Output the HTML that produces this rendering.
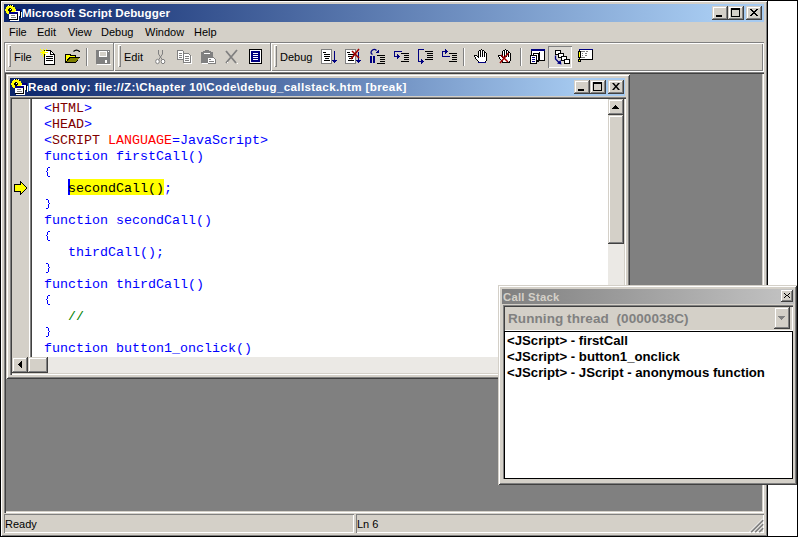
<!DOCTYPE html>
<html><head><meta charset="utf-8">
<style>
*{margin:0;padding:0;box-sizing:border-box}
html,body{width:798px;height:537px;overflow:hidden;background:#fff;position:relative;font-family:"Liberation Sans",sans-serif;font-size:11px;line-height:13px;color:#000}
.a{position:absolute}
.face{background:#d4d0c8}
.cbtn{position:absolute;width:16px;height:14px;background:#d4d0c8;box-shadow:inset -1px -1px #404040,inset 1px 1px #d4d0c8,inset -2px -2px #808080,inset 2px 2px #fff}
.sunk{position:absolute;box-shadow:inset 1px 1px #808080,inset -1px -1px #fff}
.mono{position:absolute;font-family:"Liberation Mono",monospace;font-size:13.33px;white-space:pre;line-height:16px;}
.cap{position:absolute;color:#fff;font-weight:bold;white-space:pre;line-height:14px}
.t{position:absolute;white-space:pre}
.grip{position:absolute;width:3px;height:22px;top:45px;box-shadow:inset 1px 1px #fff,inset -1px -1px #808080;background:#d4d0c8}
.vsep{position:absolute;width:2px;height:18px;top:48px;box-shadow:inset 1px 0 #808080,inset -1px 0 #fff}
.bdiv{position:absolute;width:2px;height:28px;top:43px;box-shadow:inset 1px 0 #808080,inset -1px 0 #fff}
svg{position:absolute;overflow:visible}
.b{color:#0000ff}.m{color:#800000;-webkit-text-stroke:0}.r{color:#ff0000}.n{color:#000080}.g{color:#008000}
</style></head><body>
<!-- outer black border -->
<div class="a" style="left:0;top:0;width:798px;height:1px;background:#000"></div>
<div class="a" style="left:797px;top:0;width:1px;height:537px;background:#000"></div>

<!-- main window -->
<div class="a face" style="left:0;top:0;width:768px;height:537px;box-shadow:inset 1px 1px #000,inset -1px -1px #000,inset 2px 2px #fff,inset -2px -2px #808080"></div>
<!-- title -->
<div class="a" style="left:4px;top:4px;width:760px;height:18px;background:linear-gradient(to right,#0a246a,#a6caf0 93%)"></div>
<svg style="left:4px;top:3px" width="20" height="20" shape-rendering="crispEdges"><rect x="9" y="6" width="8" height="2" fill="#000080"/><rect x="9" y="8" width="7" height="5" fill="#fff"/><rect x="16" y="8" width="1" height="6" fill="#000"/><rect x="17" y="9" width="1" height="6" fill="#fff"/>
<path d="M5 2h3v1h2v1h1v2h1v2h-1v2h-1v1h-2v1h-3v-1h-2v-1h-1v-2h-1v-2h1v-2h1v-1h2z" fill="#ffff00"/>
<rect x="5" y="5" width="2" height="1" fill="#000"/><rect x="5" y="8" width="2" height="1" fill="#000"/><rect x="4" y="6" width="1" height="2" fill="#000"/><rect x="7" y="6" width="1" height="2" fill="#000"/><rect x="5" y="6" width="2" height="2" fill="#000"/><rect x="6" y="6" width="1" height="1" fill="#fff"/>
<rect x="5" y="2" width="1" height="1" fill="#000"/><rect x="7" y="2" width="1" height="1" fill="#000"/><rect x="9" y="3" width="1" height="1" fill="#000"/><rect x="4" y="2" width="1" height="1" fill="#fff"/><rect x="8" y="2" width="1" height="1" fill="#fff"/>
<rect x="5" y="9" width="9" height="2" fill="#000080"/><rect x="5" y="11" width="8" height="5" fill="#fff"/><rect x="13" y="11" width="1" height="6" fill="#000"/><rect x="5" y="16" width="9" height="1" fill="#000"/><rect x="6" y="17" width="9" height="1" fill="#fff"/><rect x="14" y="11" width="1" height="7" fill="#fff"/>
<rect x="7" y="12" width="4" height="1" fill="#808080"/><rect x="7" y="14" width="4" height="1" fill="#808080"/><rect x="11" y="14" width="1" height="1" fill="#808080"/></svg>
<div class="cap" style="left:22px;top:6px;font-size:11.6px;letter-spacing:0.1px">Microsoft Script Debugger</div>
<div class="cbtn" style="left:712px;top:6px"><svg style="left:4px;top:9px" width="6" height="2"><rect width="6" height="2" fill="#000"/></svg></div>
<div class="cbtn" style="left:728px;top:6px"><svg style="left:3px;top:2px" width="9" height="9"><path d="M0 0h9v9h-9zM1 2v6h7v-6z" fill="#000" fill-rule="evenodd"/></svg></div>
<div class="cbtn" style="left:746px;top:6px"><svg style="left:4px;top:3px" width="8" height="7" shape-rendering="crispEdges"><path d="M0 0h2l2 2.5l2-2.5h2l-3 3.5l3 3.5h-2l-2-2.5l-2 2.5h-2l3-3.5z" fill="#000"/></svg></div>

<!-- menu -->
<div class="t" style="left:9px;top:26px">File</div>
<div class="t" style="left:37px;top:26px">Edit</div>
<div class="t" style="left:68px;top:26px">View</div>
<div class="t" style="left:101px;top:26px">Debug</div>
<div class="t" style="left:145px;top:26px">Window</div>
<div class="t" style="left:194px;top:26px">Help</div>

<!-- toolbar band -->
<div class="a" style="left:4px;top:42px;width:760px;height:30px;box-shadow:inset 1px 1px #808080,inset -1px -1px #fff,inset 2px 2px #fff,inset -2px -2px #808080"></div>
<div class="grip" style="left:8px"></div>
<div class="t" style="left:14px;top:51px">File</div>
<div class="vsep" style="left:86px"></div>
<div class="bdiv" style="left:113px"></div>
<div class="grip" style="left:118px"></div>
<div class="t" style="left:124px;top:51px">Edit</div>
<div class="bdiv" style="left:270px"></div>
<div class="grip" style="left:274px"></div>
<div class="t" style="left:280px;top:51px">Debug</div>
<div class="vsep" style="left:463px"></div>
<div class="vsep" style="left:520px"></div>
<!-- call stack pressed button -->
<div class="a" style="left:548px;top:46px;width:24px;height:22px;background:#dbd8d2;box-shadow:inset 1px 1px #808080,inset -1px -1px #fff"></div>

<!--ICONS-->
<svg style="left:38px;top:46px" width="20" height="20" shape-rendering="crispEdges">
<path d="M6 4h6l4 4v10h-10z" fill="#fff" stroke="#000" stroke-width="1" transform="translate(0.5,0.5)"/>
<path d="M12 4v4h4" fill="none" stroke="#000" transform="translate(0.5,0.5)"/>
<rect x="8" y="10" width="7" height="1" fill="#000"/><rect x="8" y="12" width="7" height="1" fill="#000"/><rect x="8" y="14" width="7" height="1" fill="#000"/>
<path d="M2 3l6 6M8 3l-6 6M5 2v8M1 6h8" stroke="#ffff00" stroke-width="1.2" transform="translate(0.5,0.5)"/>
</svg>
<svg style="left:62px;top:46px" width="20" height="20" shape-rendering="crispEdges">
<path d="M3 8h5l1 1h5v2h4l-4 6h-11z" fill="#000"/>
<path d="M4 9h3l1 1h5v1h-6l-3 5z" fill="#ffff00"/>
<path d="M5 16l3-4h9l-3 4z" fill="#808000"/>
<path d="M11.5 5.5q3-3 6 0" fill="none" stroke="#000" stroke-width="1.2" shape-rendering="auto"/>
<path d="M16 6h2v-2z" fill="#000"/>
</svg>
<svg style="left:93px;top:46px" width="20" height="20" shape-rendering="crispEdges">
<rect x="3" y="4" width="14" height="14" fill="#808080"/>
<rect x="6" y="5" width="8" height="6" fill="#fff"/><rect x="7" y="6" width="6" height="4" fill="#d4d0c8"/>
<rect x="12" y="14" width="2" height="3" fill="#fff"/><rect x="15" y="5" width="1" height="1" fill="#fff"/>
<rect x="4" y="18" width="14" height="1" fill="#fff"/>
</svg>
<svg style="left:152px;top:46px" width="20" height="20" shape-rendering="crispEdges">
<path d="M6.5 4v4l2 3M10.5 4v4l-2 3M8.5 11l-2 3M8.5 11l2 3" fill="none" stroke="#808080" stroke-width="1" shape-rendering="auto"/>
<ellipse cx="5.5" cy="15.5" rx="1.8" ry="2.2" fill="#fff" stroke="#808080" shape-rendering="auto"/>
<ellipse cx="11" cy="15.5" rx="1.8" ry="2.2" fill="#fff" stroke="#808080" shape-rendering="auto"/>
</svg>
<svg style="left:175px;top:46px" width="20" height="20" shape-rendering="crispEdges">
<path d="M2.5 4.5h5l1 1v8h-6z" fill="#fff" stroke="#808080"/>
<path d="M8.5 7.5h5l2 2v7h-7z" fill="#fff" stroke="#808080"/>
<rect x="4" y="7" width="3" height="1" fill="#808080"/><rect x="4" y="9" width="3" height="1" fill="#808080"/><rect x="4" y="11" width="3" height="1" fill="#808080"/>
<rect x="10" y="10" width="4" height="1" fill="#808080"/><rect x="10" y="12" width="4" height="1" fill="#808080"/><rect x="10" y="14" width="4" height="1" fill="#808080"/>
<rect x="9" y="17" width="8" height="1" fill="#fff"/><rect x="16" y="10" width="1" height="8" fill="#fff"/>
</svg>
<svg style="left:199px;top:46px" width="20" height="20" shape-rendering="crispEdges">
<path d="M2 6h2v-1h2v-1h4v1h2v1h2v11h-12z" fill="#808080"/>
<rect x="5" y="7" width="6" height="1" fill="#fff"/>
<path d="M8.5 11.5h6l2 2v4h-8z" fill="#fff" stroke="#808080"/>
<rect x="10" y="13" width="2" height="1" fill="#808080"/><rect x="10" y="15" width="5" height="1" fill="#808080"/>
<rect x="3" y="17" width="6" height="1" fill="#fff"/>
</svg>
<svg style="left:222px;top:46px" width="20" height="20" shape-rendering="crispEdges">
<path d="M4 5l10 12M15 4l-11 13" stroke="#808080" stroke-width="1.8" shape-rendering="auto"/>
<path d="M5 17l1-1M15 17l1 1" stroke="#fff" stroke-width="1" shape-rendering="auto"/>
</svg>
<svg style="left:246px;top:46px" width="20" height="20" shape-rendering="crispEdges">
<rect x="3" y="3" width="13" height="15" fill="#000"/>
<rect x="4" y="4" width="11" height="13" fill="#fff"/>
<rect x="5" y="5" width="9" height="11" fill="#000080"/>
<rect x="7" y="7" width="5" height="1" fill="#fff"/><rect x="7" y="9" width="5" height="1" fill="#fff"/><rect x="7" y="11" width="5" height="1" fill="#fff"/><rect x="7" y="13" width="5" height="1" fill="#fff"/>
</svg>
<svg style="left:318px;top:46px" width="20" height="20" shape-rendering="crispEdges">
<rect x="3" y="3" width="11" height="15" fill="#808080"/><rect x="4" y="4" width="9" height="13" fill="#fff"/>
<rect x="5" y="6" width="3" height="1" fill="#000"/><rect x="6" y="8" width="6" height="1" fill="#000"/><rect x="6" y="10" width="6" height="1" fill="#000"/><rect x="7" y="12" width="4" height="1" fill="#000"/><rect x="6" y="14" width="6" height="1" fill="#000"/>
<rect x="16" y="5" width="1" height="10" fill="#000080"/><path d="M14 14h5l-2.5 3z" fill="#000080"/>
</svg>
<svg style="left:343px;top:46px" width="20" height="20" shape-rendering="crispEdges">
<rect x="2" y="3" width="11" height="15" fill="#808080"/><rect x="3" y="4" width="9" height="13" fill="#fff"/>
<rect x="4" y="6" width="3" height="1" fill="#000"/><rect x="5" y="8" width="6" height="1" fill="#000"/><rect x="5" y="10" width="6" height="1" fill="#000"/><rect x="6" y="12" width="4" height="1" fill="#000"/><rect x="5" y="14" width="6" height="1" fill="#000"/>
<rect x="15" y="6" width="1" height="9" fill="#000080"/><path d="M13 14h5l-2.5 3z" fill="#000080"/>
<path d="M8 13l8-10M9 5l7 7" stroke="#a00000" stroke-width="1.6" shape-rendering="auto"/>
</svg>
<svg style="left:367px;top:46px" width="20" height="20" shape-rendering="crispEdges">
<rect x="3" y="10" width="2" height="7" fill="#000080"/><rect x="6" y="10" width="2" height="7" fill="#000080"/>
<path d="M5.5 8.5q-3-2 0-4.5q2-1.5 4 0.5" fill="none" stroke="#000080" stroke-width="1.3" shape-rendering="auto"/>
<path d="M8 7h4v-3z" fill="#000080"/>
<rect x="10" y="9" width="8" height="1" fill="#000"/><rect x="13" y="11" width="5" height="1" fill="#000"/><rect x="13" y="13" width="5" height="1" fill="#000"/><rect x="13" y="15" width="5" height="1" fill="#000"/><rect x="10" y="17" width="8" height="1" fill="#000"/>
</svg>
<svg style="left:391px;top:46px" width="20" height="20" shape-rendering="crispEdges">
<rect x="3" y="5" width="8" height="1" fill="#000080"/><rect x="3" y="5" width="1" height="6" fill="#000080"/><rect x="3" y="10" width="4" height="1" fill="#000080"/>
<path d="M6 8h1v1h1v1h1v1h-1v1h-1v1h-1z" fill="#000080"/>
<rect x="10" y="7" width="8" height="1" fill="#000"/><rect x="13" y="9" width="5" height="1" fill="#000"/><rect x="13" y="11" width="5" height="1" fill="#000"/><rect x="13" y="13" width="5" height="1" fill="#000"/><rect x="10" y="15" width="8" height="1" fill="#000"/>
</svg>
<svg style="left:415px;top:46px" width="20" height="20" shape-rendering="crispEdges">
<rect x="3" y="3" width="6" height="1" fill="#000080"/><rect x="3" y="3" width="1" height="13" fill="#000080"/><rect x="3" y="15" width="4" height="1" fill="#000080"/>
<path d="M6 13h1v1h1v1h1v1h-1v1h-1v1h-1z" fill="#000080"/>
<rect x="10" y="5" width="8" height="1" fill="#000"/><rect x="12" y="7" width="6" height="1" fill="#000"/><rect x="12" y="9" width="6" height="1" fill="#000"/><rect x="12" y="11" width="6" height="1" fill="#000"/><rect x="10" y="13" width="8" height="1" fill="#000"/>
</svg>
<svg style="left:439px;top:46px" width="20" height="20" shape-rendering="crispEdges">
<rect x="3" y="5" width="1" height="6" fill="#000080"/><rect x="3" y="10" width="8" height="1" fill="#000080"/><rect x="3" y="5" width="4" height="1" fill="#000080"/>
<path d="M6 3h1v1h1v1h1v1h-1v1h-1v1h-1z" fill="#000080"/>
<rect x="10" y="7" width="8" height="1" fill="#000"/><rect x="13" y="9" width="5" height="1" fill="#000"/><rect x="13" y="11" width="5" height="1" fill="#000"/><rect x="13" y="13" width="5" height="1" fill="#000"/><rect x="10" y="15" width="8" height="1" fill="#000"/>
</svg>
<svg style="left:471px;top:46px" width="20" height="20" shape-rendering="crispEdges"><rect x="10" y="3" width="1" height="1" fill="#000"/><rect x="8" y="4" width="2" height="1" fill="#000"/><rect x="10" y="4" width="1" height="1" fill="#fff"/><rect x="11" y="4" width="2" height="1" fill="#000"/><rect x="7" y="5" width="1" height="1" fill="#000"/><rect x="8" y="5" width="1" height="1" fill="#fff"/><rect x="9" y="5" width="1" height="1" fill="#000"/><rect x="10" y="5" width="1" height="1" fill="#fff"/><rect x="11" y="5" width="1" height="1" fill="#000"/><rect x="12" y="5" width="1" height="1" fill="#fff"/><rect x="13" y="5" width="1" height="1" fill="#000"/><rect x="7" y="6" width="1" height="1" fill="#000"/><rect x="8" y="6" width="1" height="1" fill="#fff"/><rect x="9" y="6" width="1" height="1" fill="#000"/><rect x="10" y="6" width="1" height="1" fill="#fff"/><rect x="11" y="6" width="1" height="1" fill="#000"/><rect x="12" y="6" width="1" height="1" fill="#fff"/><rect x="13" y="6" width="2" height="1" fill="#000"/><rect x="7" y="7" width="1" height="1" fill="#000"/><rect x="8" y="7" width="1" height="1" fill="#fff"/><rect x="9" y="7" width="1" height="1" fill="#000"/><rect x="10" y="7" width="1" height="1" fill="#fff"/><rect x="11" y="7" width="1" height="1" fill="#000"/><rect x="12" y="7" width="1" height="1" fill="#fff"/><rect x="13" y="7" width="1" height="1" fill="#000"/><rect x="14" y="7" width="1" height="1" fill="#fff"/><rect x="15" y="7" width="1" height="1" fill="#000"/><rect x="7" y="8" width="1" height="1" fill="#000"/><rect x="8" y="8" width="1" height="1" fill="#fff"/><rect x="9" y="8" width="1" height="1" fill="#000"/><rect x="10" y="8" width="1" height="1" fill="#fff"/><rect x="11" y="8" width="1" height="1" fill="#000"/><rect x="12" y="8" width="1" height="1" fill="#fff"/><rect x="13" y="8" width="1" height="1" fill="#000"/><rect x="14" y="8" width="1" height="1" fill="#fff"/><rect x="15" y="8" width="1" height="1" fill="#000"/><rect x="3" y="9" width="3" height="1" fill="#000"/><rect x="7" y="9" width="1" height="1" fill="#000"/><rect x="8" y="9" width="1" height="1" fill="#fff"/><rect x="9" y="9" width="1" height="1" fill="#000"/><rect x="10" y="9" width="1" height="1" fill="#fff"/><rect x="11" y="9" width="1" height="1" fill="#000"/><rect x="12" y="9" width="1" height="1" fill="#fff"/><rect x="13" y="9" width="1" height="1" fill="#000"/><rect x="14" y="9" width="1" height="1" fill="#fff"/><rect x="15" y="9" width="1" height="1" fill="#000"/><rect x="3" y="10" width="1" height="1" fill="#000"/><rect x="4" y="10" width="2" height="1" fill="#fff"/><rect x="6" y="10" width="2" height="1" fill="#000"/><rect x="8" y="10" width="1" height="1" fill="#fff"/><rect x="9" y="10" width="1" height="1" fill="#000"/><rect x="10" y="10" width="1" height="1" fill="#fff"/><rect x="11" y="10" width="1" height="1" fill="#000"/><rect x="12" y="10" width="1" height="1" fill="#fff"/><rect x="13" y="10" width="1" height="1" fill="#000"/><rect x="14" y="10" width="1" height="1" fill="#fff"/><rect x="15" y="10" width="1" height="1" fill="#000"/><rect x="4" y="11" width="1" height="1" fill="#000"/><rect x="5" y="11" width="2" height="1" fill="#fff"/><rect x="7" y="11" width="1" height="1" fill="#000"/><rect x="8" y="11" width="7" height="1" fill="#fff"/><rect x="15" y="11" width="1" height="1" fill="#000"/><rect x="4" y="12" width="1" height="1" fill="#000"/><rect x="5" y="12" width="10" height="1" fill="#fff"/><rect x="15" y="12" width="1" height="1" fill="#000"/><rect x="5" y="13" width="1" height="1" fill="#000"/><rect x="6" y="13" width="9" height="1" fill="#fff"/><rect x="15" y="13" width="1" height="1" fill="#000"/><rect x="6" y="14" width="1" height="1" fill="#000"/><rect x="7" y="14" width="8" height="1" fill="#fff"/><rect x="15" y="14" width="1" height="1" fill="#000"/><rect x="7" y="15" width="1" height="1" fill="#000"/><rect x="8" y="15" width="6" height="1" fill="#fff"/><rect x="14" y="15" width="1" height="1" fill="#000"/><rect x="7" y="16" width="8" height="1" fill="#000080"/></svg>
<svg style="left:495px;top:46px" width="20" height="20" shape-rendering="crispEdges"><rect x="10" y="3" width="1" height="1" fill="#000"/><rect x="8" y="4" width="2" height="1" fill="#000"/><rect x="10" y="4" width="1" height="1" fill="#fff"/><rect x="11" y="4" width="2" height="1" fill="#000"/><rect x="7" y="5" width="1" height="1" fill="#000"/><rect x="8" y="5" width="1" height="1" fill="#fff"/><rect x="9" y="5" width="1" height="1" fill="#000"/><rect x="10" y="5" width="1" height="1" fill="#fff"/><rect x="11" y="5" width="1" height="1" fill="#000"/><rect x="12" y="5" width="1" height="1" fill="#fff"/><rect x="13" y="5" width="1" height="1" fill="#000"/><rect x="7" y="6" width="1" height="1" fill="#000"/><rect x="8" y="6" width="1" height="1" fill="#fff"/><rect x="9" y="6" width="1" height="1" fill="#000"/><rect x="10" y="6" width="1" height="1" fill="#fff"/><rect x="11" y="6" width="1" height="1" fill="#000"/><rect x="12" y="6" width="1" height="1" fill="#fff"/><rect x="13" y="6" width="2" height="1" fill="#000"/><rect x="7" y="7" width="1" height="1" fill="#000"/><rect x="8" y="7" width="1" height="1" fill="#fff"/><rect x="9" y="7" width="1" height="1" fill="#000"/><rect x="10" y="7" width="1" height="1" fill="#fff"/><rect x="11" y="7" width="1" height="1" fill="#000"/><rect x="12" y="7" width="1" height="1" fill="#fff"/><rect x="13" y="7" width="1" height="1" fill="#000"/><rect x="14" y="7" width="1" height="1" fill="#fff"/><rect x="15" y="7" width="1" height="1" fill="#000"/><rect x="7" y="8" width="1" height="1" fill="#000"/><rect x="8" y="8" width="1" height="1" fill="#fff"/><rect x="9" y="8" width="1" height="1" fill="#000"/><rect x="10" y="8" width="1" height="1" fill="#fff"/><rect x="11" y="8" width="1" height="1" fill="#000"/><rect x="12" y="8" width="1" height="1" fill="#fff"/><rect x="13" y="8" width="1" height="1" fill="#000"/><rect x="14" y="8" width="1" height="1" fill="#fff"/><rect x="15" y="8" width="1" height="1" fill="#000"/><rect x="3" y="9" width="3" height="1" fill="#000"/><rect x="7" y="9" width="1" height="1" fill="#000"/><rect x="8" y="9" width="1" height="1" fill="#fff"/><rect x="9" y="9" width="1" height="1" fill="#000"/><rect x="10" y="9" width="1" height="1" fill="#fff"/><rect x="11" y="9" width="1" height="1" fill="#000"/><rect x="12" y="9" width="1" height="1" fill="#fff"/><rect x="13" y="9" width="1" height="1" fill="#000"/><rect x="14" y="9" width="1" height="1" fill="#fff"/><rect x="15" y="9" width="1" height="1" fill="#000"/><rect x="3" y="10" width="1" height="1" fill="#000"/><rect x="4" y="10" width="2" height="1" fill="#fff"/><rect x="6" y="10" width="2" height="1" fill="#000"/><rect x="8" y="10" width="1" height="1" fill="#fff"/><rect x="9" y="10" width="1" height="1" fill="#000"/><rect x="10" y="10" width="1" height="1" fill="#fff"/><rect x="11" y="10" width="1" height="1" fill="#000"/><rect x="12" y="10" width="1" height="1" fill="#fff"/><rect x="13" y="10" width="1" height="1" fill="#000"/><rect x="14" y="10" width="1" height="1" fill="#fff"/><rect x="15" y="10" width="1" height="1" fill="#000"/><rect x="4" y="11" width="1" height="1" fill="#000"/><rect x="5" y="11" width="2" height="1" fill="#fff"/><rect x="7" y="11" width="1" height="1" fill="#000"/><rect x="8" y="11" width="7" height="1" fill="#fff"/><rect x="15" y="11" width="1" height="1" fill="#000"/><rect x="4" y="12" width="1" height="1" fill="#000"/><rect x="5" y="12" width="10" height="1" fill="#fff"/><rect x="15" y="12" width="1" height="1" fill="#000"/><rect x="5" y="13" width="1" height="1" fill="#000"/><rect x="6" y="13" width="9" height="1" fill="#fff"/><rect x="15" y="13" width="1" height="1" fill="#000"/><rect x="6" y="14" width="1" height="1" fill="#000"/><rect x="7" y="14" width="8" height="1" fill="#fff"/><rect x="15" y="14" width="1" height="1" fill="#000"/><rect x="7" y="15" width="1" height="1" fill="#000"/><rect x="8" y="15" width="6" height="1" fill="#fff"/><rect x="14" y="15" width="1" height="1" fill="#000"/><rect x="7" y="16" width="8" height="1" fill="#000"/><path d="M5 17L13.5 7M6 9L13 16" stroke="#a00000" stroke-width="1.5" shape-rendering="auto"/></svg>
<svg style="left:528px;top:46px" width="20" height="20" shape-rendering="crispEdges">
<rect x="3" y="3" width="14" height="12" fill="#000"/><rect x="3" y="3" width="14" height="2" fill="#000080"/>
<rect x="4" y="5" width="12" height="9" fill="#fff"/><rect x="11" y="6" width="1" height="8" fill="#000"/>
<rect x="5" y="7" width="6" height="9" fill="#000"/><rect x="6" y="8" width="4" height="6" fill="#fff"/>
<rect x="2" y="9" width="7" height="9" fill="#000"/><rect x="3" y="10" width="5" height="7" fill="#fff"/>
<rect x="4" y="11" width="3" height="1" fill="#000080"/><rect x="4" y="13" width="3" height="1" fill="#000080"/><rect x="4" y="15" width="3" height="1" fill="#000080"/>
</svg>
<svg style="left:552px;top:46px" width="20" height="20" shape-rendering="crispEdges">
<rect x="3" y="4" width="6" height="5" fill="#000"/><rect x="4" y="5" width="4" height="3" fill="#fff"/>
<rect x="6" y="7" width="6" height="5" fill="#000"/><rect x="7" y="8" width="4" height="3" fill="#fff"/>
<rect x="9" y="10" width="6" height="5" fill="#000"/><rect x="10" y="11" width="4" height="3" fill="#fff"/>
<rect x="12" y="13" width="6" height="5" fill="#000"/><rect x="13" y="14" width="4" height="3" fill="#fff"/>
<path d="M3.5 9.5v3.5l3.5 3.5" fill="none" stroke="#000080" stroke-width="1.3" shape-rendering="auto"/>
<polygon points="9.5,18.5 5,17.5 8.5,14" fill="#000080" shape-rendering="auto"/>
</svg>
<svg style="left:576px;top:46px" width="20" height="20" shape-rendering="crispEdges">
<rect x="3" y="3" width="14" height="11" fill="#000"/><rect x="3" y="3" width="14" height="1" fill="#000080"/>
<rect x="4" y="4" width="12" height="9" fill="#fff"/>
<rect x="5" y="5" width="4" height="1" fill="#808080"/><rect x="10" y="5" width="2" height="1" fill="#808080"/><rect x="6" y="7" width="1" height="1" fill="#808080"/><rect x="9" y="7" width="2" height="1" fill="#808080"/><rect x="6" y="9" width="1" height="1" fill="#808080"/><rect x="9" y="9" width="2" height="1" fill="#808080"/><rect x="5" y="11" width="4" height="1" fill="#808080"/>
<rect x="2" y="5" width="3" height="7" fill="#000"/><rect x="3" y="6" width="1" height="5" fill="#ffff00"/>
<rect x="2" y="13" width="3" height="3" fill="#000"/><rect x="3" y="14" width="1" height="1" fill="#ffff00"/>
</svg>


<!-- MDI client -->
<div class="a" style="left:4px;top:72px;width:760px;height:441px;background:#808080;box-shadow:inset 1px 1px #808080,inset 2px 2px #404040,inset -1px -1px #fff,inset -2px -2px #d4d0c8"></div>

<!-- child window -->
<div class="a face" style="left:6px;top:74px;width:624px;height:305px;box-shadow:inset 1px 1px #d4d0c8,inset -1px -1px #404040,inset 2px 2px #fff,inset -2px -2px #808080"></div>
<div class="a" style="left:10px;top:78px;width:615px;height:18px;background:linear-gradient(to right,#0a246a,#a6caf0 93%)"></div>
<svg style="left:10px;top:77px" width="20" height="20" shape-rendering="crispEdges"><rect x="9" y="6" width="8" height="2" fill="#000080"/><rect x="9" y="8" width="7" height="5" fill="#fff"/><rect x="16" y="8" width="1" height="6" fill="#000"/><rect x="17" y="9" width="1" height="6" fill="#fff"/>
<path d="M5 2h3v1h2v1h1v2h1v2h-1v2h-1v1h-2v1h-3v-1h-2v-1h-1v-2h-1v-2h1v-2h1v-1h2z" fill="#ffff00"/>
<rect x="5" y="5" width="2" height="1" fill="#000"/><rect x="5" y="8" width="2" height="1" fill="#000"/><rect x="4" y="6" width="1" height="2" fill="#000"/><rect x="7" y="6" width="1" height="2" fill="#000"/><rect x="5" y="6" width="2" height="2" fill="#000"/><rect x="6" y="6" width="1" height="1" fill="#fff"/>
<rect x="5" y="2" width="1" height="1" fill="#000"/><rect x="7" y="2" width="1" height="1" fill="#000"/><rect x="9" y="3" width="1" height="1" fill="#000"/><rect x="4" y="2" width="1" height="1" fill="#fff"/><rect x="8" y="2" width="1" height="1" fill="#fff"/>
<rect x="5" y="9" width="9" height="2" fill="#000080"/><rect x="5" y="11" width="8" height="5" fill="#fff"/><rect x="13" y="11" width="1" height="6" fill="#000"/><rect x="5" y="16" width="9" height="1" fill="#000"/><rect x="6" y="17" width="9" height="1" fill="#fff"/><rect x="14" y="11" width="1" height="7" fill="#fff"/>
<rect x="7" y="12" width="4" height="1" fill="#808080"/><rect x="7" y="14" width="4" height="1" fill="#808080"/><rect x="11" y="14" width="1" height="1" fill="#808080"/></svg>
<div class="cap" style="left:28px;top:80px;font-size:11.6px;letter-spacing:0.36px">Read only: file://Z:\Chapter 10\Code\debug_callstack.htm [break]</div>
<div class="cbtn" style="left:574px;top:80px"><svg style="left:4px;top:9px" width="6" height="2"><rect width="6" height="2" fill="#000"/></svg></div>
<div class="cbtn" style="left:590px;top:80px"><svg style="left:3px;top:2px" width="9" height="9"><path d="M0 0h9v9h-9zM1 2v6h7v-6z" fill="#000" fill-rule="evenodd"/></svg></div>
<div class="cbtn" style="left:608px;top:80px"><svg style="left:4px;top:3px" width="8" height="7"><path d="M0 0h2l2 2.5l2-2.5h2l-3 3.5l3 3.5h-2l-2-2.5l-2 2.5h-2l3-3.5z" fill="#000"/></svg></div>

<!-- editor -->
<div class="a" style="left:10px;top:97px;width:616px;height:278px;background:#d4d0c8;box-shadow:inset 1px 1px #808080,inset 2px 2px #404040,inset -1px -1px #fff,inset -2px -2px #d4d0c8"></div>
<div class="a" style="left:32px;top:99px;width:576px;height:258px;background:#fff"></div>
<div class="a" style="left:29px;top:99px;width:3px;height:258px;box-shadow:inset 1px 0 #fff,inset -1px 0 #404040;background:#808080"></div>
<svg style="left:14px;top:181px" width="14" height="14" shape-rendering="crispEdges">
 <path d="M0.5 3.5h6v-3l6.5 6.5l-6.5 6.5v-3h-6z" fill="#ffff00" stroke="#000" stroke-width="1.4" stroke-linejoin="miter"/>
</svg>
<div class="a" style="left:68px;top:179px;width:96px;height:16px;background:#ffff00"></div>
<div class="a" style="left:68px;top:179px;width:2px;height:16px;background:#0000ff"></div>
<div class="mono" style="left:44px;top:101px"><span class="b">&lt;</span><span class="m">HTML</span><span class="b">&gt;</span>
<span class="b">&lt;</span><span class="m">HEAD</span><span class="b">&gt;</span>
<span class="b">&lt;</span><span class="m">SCRIPT</span> <span class="r">LANGUAGE</span><span class="b">=JavaScript&gt;</span>
<span class="b">function firstCall()</span>
 
   <span style="color:#000;-webkit-text-stroke-color:#ffff00">secondCall()</span><span class="b">;</span>
 
<span class="b">function secondCall()</span>
 
   <span class="b">thirdCall();</span>
 
<span class="b">function thirdCall()</span>
 
   <span class="g">//</span>
 
<span class="b">function button1_onclick()</span></div>
<svg style="left:0;top:0" width="798" height="537" shape-rendering="crispEdges" fill="#0000ff"><rect x="48" y="167" width="2" height="1"/><rect x="47" y="168" width="1" height="3"/><rect x="46" y="171" width="1" height="1"/><rect x="47" y="172" width="1" height="4"/><rect x="48" y="176" width="2" height="1"/><rect x="46" y="199" width="2" height="1"/><rect x="48" y="200" width="1" height="3"/><rect x="49" y="203" width="1" height="1"/><rect x="48" y="204" width="1" height="4"/><rect x="46" y="208" width="2" height="1"/><rect x="48" y="231" width="2" height="1"/><rect x="47" y="232" width="1" height="3"/><rect x="46" y="235" width="1" height="1"/><rect x="47" y="236" width="1" height="4"/><rect x="48" y="240" width="2" height="1"/><rect x="46" y="263" width="2" height="1"/><rect x="48" y="264" width="1" height="3"/><rect x="49" y="267" width="1" height="1"/><rect x="48" y="268" width="1" height="4"/><rect x="46" y="272" width="2" height="1"/><rect x="48" y="295" width="2" height="1"/><rect x="47" y="296" width="1" height="3"/><rect x="46" y="299" width="1" height="1"/><rect x="47" y="300" width="1" height="4"/><rect x="48" y="304" width="2" height="1"/><rect x="46" y="327" width="2" height="1"/><rect x="48" y="328" width="1" height="3"/><rect x="49" y="331" width="1" height="1"/><rect x="48" y="332" width="1" height="4"/><rect x="46" y="336" width="2" height="1"/></svg>
<!-- vscroll -->
<div class="a" style="left:608px;top:99px;width:16px;height:258px;background:#ebe9e5"></div>
<div class="a" style="left:608px;top:99px;width:16px;height:16px;background:#d4d0c8;box-shadow:inset -1px -1px #404040,inset 1px 1px #d4d0c8,inset -2px -2px #808080,inset 2px 2px #fff"><svg style="left:4px;top:6px" width="7" height="4" shape-rendering="crispEdges"><path d="M3 0h1v1h1v1h1v1h1v1h-7v-1h1v-1h1v-1h1z" fill="#000"/></svg></div>
<div class="a" style="left:608px;top:115px;width:16px;height:129px;background:#d4d0c8;box-shadow:inset -1px -1px #404040,inset 1px 1px #d4d0c8,inset -2px -2px #808080,inset 2px 2px #fff"></div>
<!-- hscroll -->
<div class="a" style="left:12px;top:357px;width:596px;height:16px;background:#ebe9e5"></div>
<div class="a" style="left:12px;top:357px;width:16px;height:16px;background:#d4d0c8;box-shadow:inset -1px -1px #404040,inset 1px 1px #d4d0c8,inset -2px -2px #808080,inset 2px 2px #fff"><svg style="left:6px;top:4px" width="4" height="7" shape-rendering="crispEdges"><path d="M3 0h1v7h-1v-1h-1v-1h-1v-1h-1v-1h1v-1h1v-1h1z" fill="#000"/></svg></div>
<div class="a" style="left:28px;top:357px;width:20px;height:16px;background:#d4d0c8;box-shadow:inset -1px -1px #404040,inset 1px 1px #d4d0c8,inset -2px -2px #808080,inset 2px 2px #fff"></div>


<!-- status bar -->
<div class="sunk" style="left:4px;top:514px;width:350px;height:19px"></div>
<div class="sunk" style="left:356px;top:514px;width:408px;height:19px"></div>
<div class="t" style="left:5px;top:518px">Ready</div>
<div class="t" style="left:357px;top:518px">Ln 6</div>
<svg style="left:750px;top:519px" width="14" height="14">
 <path d="M13 1L1 13M13 5L5 13M13 9L9 13" stroke="#808080" stroke-width="2"/>
 <path d="M13 -0.5L-0.5 13M13 3.5L3.5 13M13 7.5L7.5 13" stroke="#fff" stroke-width="1"/>
</svg>
<div class="a" style="left:0;top:536px;width:798px;height:1px;background:#000"></div>

<!-- call stack -->
<div class="a face" style="left:498px;top:285px;width:299px;height:200px;box-shadow:inset 1px 1px #d4d0c8,inset -1px -1px #404040,inset 2px 2px #fff,inset -2px -2px #808080"></div>
<div class="a" style="left:502px;top:289px;width:292px;height:15px;background:linear-gradient(to right,#808080,#c0c0c0 95%)"></div>
<div class="cap" style="left:503px;top:290px;color:#d4d0c8;font-size:11.3px;letter-spacing:0.25px">Call Stack</div>
<div class="a" style="left:781px;top:290px;width:12px;height:12px;background:#d4d0c8;box-shadow:inset -1px -1px #404040,inset 1px 1px #fff,inset -2px -2px #808080"><svg style="left:3px;top:3px" width="6" height="5" shape-rendering="crispEdges"><path d="M0 0h1v1h1v1h2v-1h1v-1h1v1h-1v1h-1v1h1v1h1v1h-1v-1h-1v-1h-2v1h-1v1h-1v-1h1v-1h1v-1h-1v-1h-1z" fill="#000"/></svg></div>
<div class="a" style="left:503px;top:305px;width:290px;height:26px;background:#d4d0c8;box-shadow:inset 1px 1px #808080,inset 2px 2px #404040,inset -1px -1px #fff,inset -2px -2px #d4d0c8"></div>
<div class="t" style="left:508px;top:311px;color:#808080;font-weight:bold;font-size:13.5px;line-height:16px;letter-spacing:0.08px">Running thread  (0000038C)</div>
<div class="a" style="left:774px;top:307px;width:16px;height:22px;background:#d4d0c8;box-shadow:inset -1px -1px #404040,inset 1px 1px #d4d0c8,inset -2px -2px #808080,inset 2px 2px #fff"><svg style="left:4px;top:9px" width="7" height="4" shape-rendering="crispEdges"><path d="M0 0h7v1h-1v1h-1v1h-1v1h-1v-1h-1v-1h-1v-1h-1z" fill="#808080"/></svg></div>
<div class="a" style="left:503px;top:331px;width:1px;height:148px;background:#808080"></div><div class="a" style="left:504px;top:331px;width:289px;height:148px;background:#fff;border:1px solid #000"></div>
<div class="t" style="left:507px;top:333px;font-weight:bold;font-size:13.2px;line-height:16px">&lt;JScript&gt; - firstCall
&lt;JScript&gt; - button1_onclick
&lt;JScript&gt; - JScript - anonymous function</div>

</body></html>
